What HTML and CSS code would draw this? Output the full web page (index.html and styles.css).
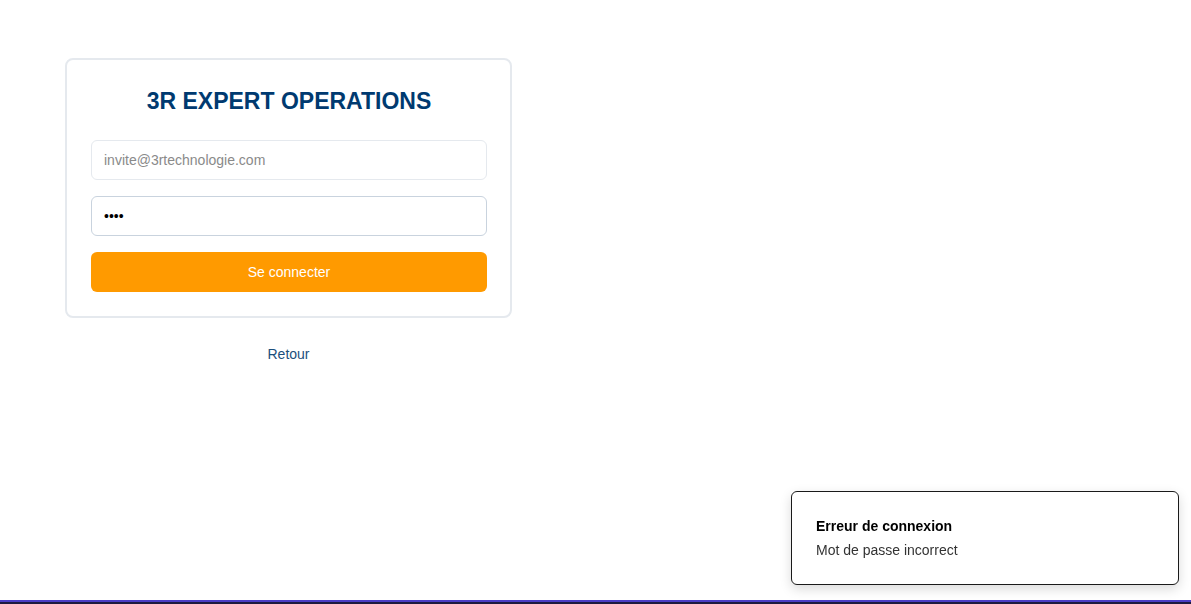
FILE: index.html
```html
<!DOCTYPE html>
<html lang="fr">
<head>
<meta charset="utf-8">
<title>3R Expert Operations</title>
<link rel="stylesheet" href="styles.css">
</head>
<body>
<main class="page">
  <div class="column">
    <section class="card">
      <h1 class="title">3R EXPERT OPERATIONS</h1>
      <form class="form">
        <input class="field" type="email" placeholder="invite@3rtechnologie.com">
        <input class="field field-active" type="password" value="1234">
        <button class="btn" type="button">Se connecter</button>
      </form>
    </section>
    <a class="back" href="#">Retour</a>
  </div>
</main>
<div class="toast">
  <div class="toast-title">Erreur de connexion</div>
  <div class="toast-text">Mot de passe incorrect</div>
</div>
<div class="bottom-bar"></div>
</body>
</html>
```

FILE: styles.css
```css
* { box-sizing: border-box; }
html, body { margin: 0; padding: 0; background: #fff; }
body {
  font-family: "Liberation Sans", Arial, sans-serif;
  color: #000;
  height: 604px;
  overflow: hidden;
}
.page {
  padding: 58px 0 0 65px;
}
.column {
  width: 447px;
  display: flex;
  flex-direction: column;
  align-items: center;
}
.card {
  width: 447px;
  border: 2px solid #e5e9ee;
  border-radius: 8px;
  padding: 26px 23px 24px 24px;
  background: #fff;
}
.title {
  margin: 0 0 24px;
  text-align: center;
  font-size: 23px;
  line-height: 30px;
  font-weight: bold;
  color: #003a70;
}
.form {
  display: flex;
  flex-direction: column;
  gap: 16px;
}
.field {
  height: 40px;
  width: 100%;
  border: 1px solid #e5e9ee;
  border-radius: 6px;
  padding: 0 12px;
  font-family: "Liberation Sans", Arial, sans-serif;
  font-size: 14px;
  color: #000;
  outline: none;
  background: #fff;
}
.field::placeholder { color: #8a8a8a; }
.field-active { border-color: #c9d3de; }
.btn {
  height: 40px;
  width: 100%;
  border: 0;
  border-radius: 6px;
  background: #ff9a00;
  color: #fff;
  font-family: "Liberation Sans", Arial, sans-serif;
  font-size: 14px;
}
.back {
  margin-top: 28px;
  font-size: 14px;
  line-height: 16px;
  color: #1b4f7c;
  text-decoration: none;
}
.toast {
  position: fixed;
  left: 791px;
  top: 491px;
  width: 388px;
  height: 94px;
  border: 1px solid #1a1a1a;
  border-radius: 6px;
  background: #fff;
  box-shadow: 0 4px 12px rgba(0,0,0,0.15);
  padding: 26px 24px;
}
.toast-title {
  font-size: 14px;
  line-height: 16px;
  font-weight: bold;
  color: #000;
}
.toast-text {
  margin-top: 8px;
  font-size: 14px;
  line-height: 16px;
  color: #333;
}
.bottom-bar {
  position: fixed;
  left: 0;
  right: 0;
  bottom: 0;
  height: 4px;
  background: #4a3dc4;
  border-bottom: 2px solid #1d1a40;
}
```
